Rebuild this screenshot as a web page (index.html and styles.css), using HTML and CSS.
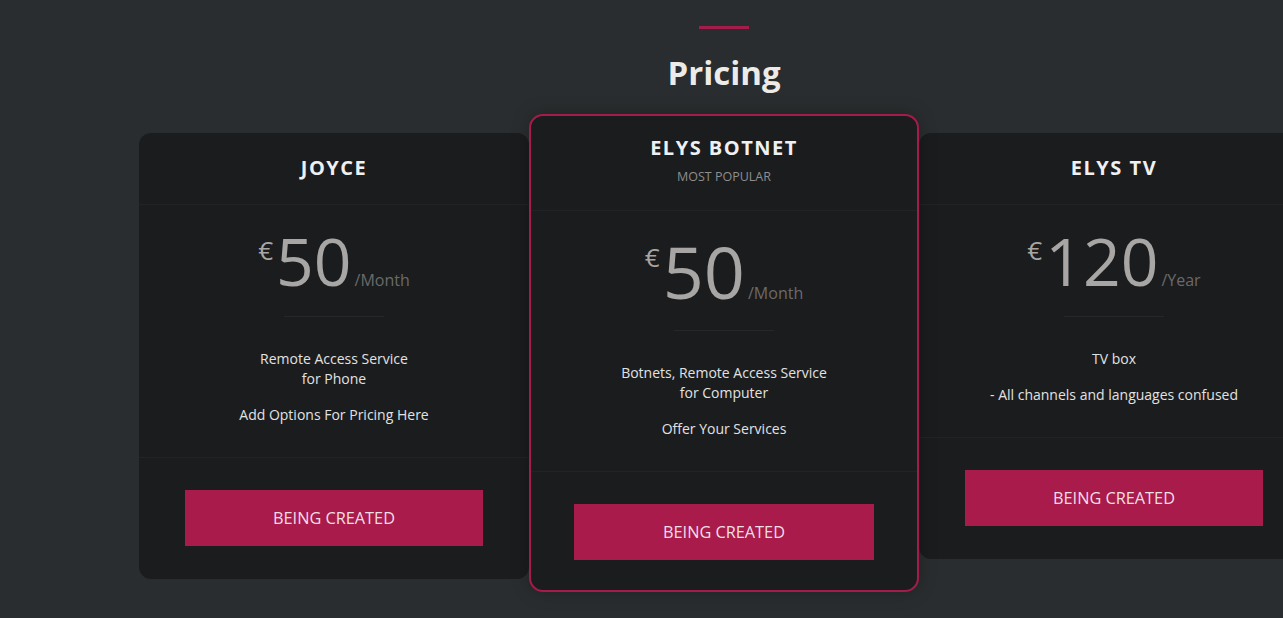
FILE: index.html
```html
<!DOCTYPE html>
<html lang="en">
<head>
<meta charset="utf-8">
<title>Pricing</title>
<link rel="stylesheet" href="styles.css">
</head>
<body>
<section class="pricing">
  <div class="bar"></div>
  <h2 class="title">Pricing</h2>
  <div class="plans">
    <div class="card">
      <div class="card-head">
        <h3 class="plan-name">JOYCE</h3>
      </div>
      <div class="card-body">
        <div class="price">
          <span class="cur">€</span><span class="amount">50</span><span class="per">/Month</span>
        </div>
        <div class="divider"></div>
        <div class="features">
          <p>Remote Access Service<br>for Phone</p>
          <p>Add Options For Pricing Here</p>
        </div>
      </div>
      <div class="card-foot">
        <a class="btn">BEING CREATED</a>
      </div>
    </div>
    <div class="card featured">
      <div class="card-head">
        <h3 class="plan-name">ELYS BOTNET</h3>
        <div class="tag">MOST POPULAR</div>
      </div>
      <div class="card-body">
        <div class="price">
          <span class="cur">€</span><span class="amount">50</span><span class="per">/Month</span>
        </div>
        <div class="divider"></div>
        <div class="features">
          <p>Botnets, Remote Access Service<br>for Computer</p>
          <p>Offer Your Services</p>
        </div>
      </div>
      <div class="card-foot">
        <a class="btn">BEING CREATED</a>
      </div>
    </div>
    <div class="card">
      <div class="card-head">
        <h3 class="plan-name">ELYS TV</h3>
      </div>
      <div class="card-body">
        <div class="price">
          <span class="cur">€</span><span class="amount">120</span><span class="per">/Year</span>
        </div>
        <div class="divider"></div>
        <div class="features">
          <p>TV box</p>
          <p>- All channels and languages confused</p>
        </div>
      </div>
      <div class="card-foot">
        <a class="btn">BEING CREATED</a>
      </div>
    </div>
  </div>
</section>
</body>
</html>
```
FILE: styles.css
```css
html, body {
  margin: 0;
  padding: 0;
}
body {
  background: #2a2d2f;
  font-family: "Open Sans", "Liberation Sans", sans-serif;
  overflow: hidden;
  width: 1283px;
  height: 618px;
}
.pricing {
  margin-left: 139px;
  width: 1170px;
  padding-top: 26px;
}
.bar {
  width: 50px;
  height: 3px;
  background: #a51c4a;
  margin: 0 auto;
}
.title {
  margin: 24px 0 0;
  font-size: 33px;
  line-height: 40px;
  font-weight: 700;
  color: #edebe8;
  text-align: center;
}
.plans {
  display: flex;
  align-items: flex-start;
  margin-top: 21px;
}
.card {
  flex: 0 0 390px;
  box-sizing: border-box;
  background: #1b1c1e;
  border-radius: 12px;
  margin-top: 19px;
  text-align: center;
}
.card.featured {
  margin-top: 0;
  border: 2px solid #a51c4a;
  border-radius: 14px;
  position: relative;
  z-index: 1;
  box-shadow: 0 0 18px rgba(0, 0, 0, 0.25);
}
.card-head {
  padding: 21px 0 23px;
  border-bottom: 1px solid #222326;
}
.featured .card-head {
  padding: 18px 0 24px;
}
.plan-name {
  margin: 0;
  font-size: 20px;
  line-height: 27px;
  font-weight: 700;
  letter-spacing: 1.5px;
  color: #eef0f2;
}
.tag {
  margin-top: 7px;
  font-size: 12.5px;
  line-height: 18px;
  color: #8e8e8e;
}
.card-body {
  padding: 22px 0 32px;
  border-bottom: 1px solid #222326;
}
.featured .card-body {
  padding-top: 24px;
}
.price {
  display: flex;
  justify-content: center;
  align-items: baseline;
  color: #a8a6a4;
}
.cur {
  align-self: flex-start;
  font-size: 26px;
  line-height: 26px;
  margin-top: 10px;
  margin-right: 3px;
}
.featured .cur {
  margin-top: 9px;
}
.amount {
  font-size: 66px;
  line-height: 66px;
}
.featured .amount {
  font-size: 72px;
  line-height: 72px;
}
.per {
  font-size: 16px;
  color: #6a6a6a;
  margin-left: 3px;
}
.divider {
  width: 100px;
  height: 1px;
  background: #26272a;
  margin: 23px auto 32px;
}
.features p {
  margin: 0;
  font-size: 14px;
  line-height: 20px;
  color: #e2e2e2;
}
.features p + p {
  margin-top: 16px;
}
.card-foot {
  padding: 32px 0 33px;
}
.featured .card-foot {
  padding-bottom: 30px;
}
.btn {
  display: block;
  width: 298px;
  height: 56px;
  margin: 0 auto;
  background: #a81b4b;
  color: #f2dfe6;
  font-size: 16.3px;
  line-height: 56px;
  text-decoration: none;
}
.featured .btn {
  width: 300px;
}
```
